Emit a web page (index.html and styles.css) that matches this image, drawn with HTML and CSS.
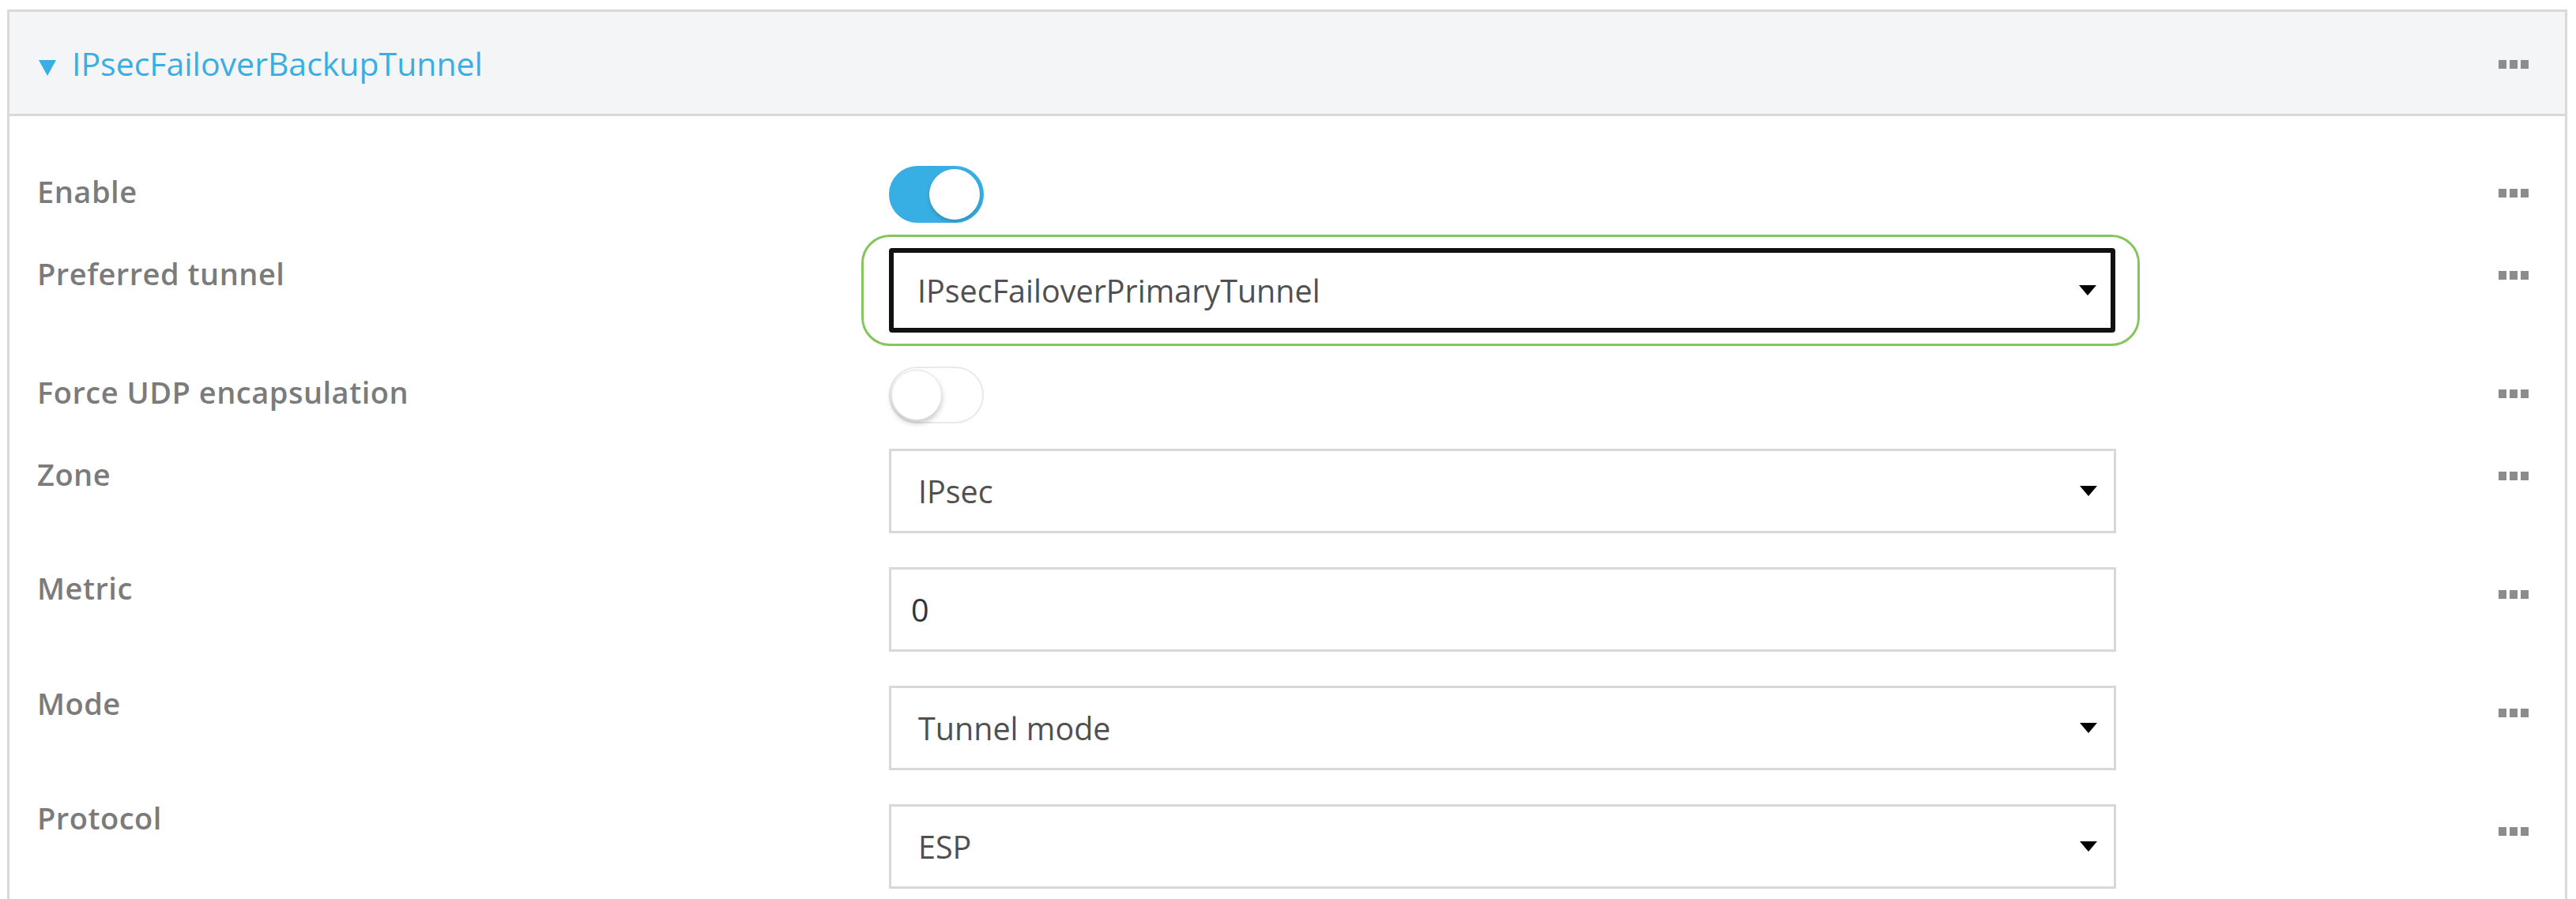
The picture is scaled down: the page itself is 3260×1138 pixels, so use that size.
FILE: index.html
```html
<!DOCTYPE html>
<html lang="en">
<head>
<meta charset="utf-8">
<title>IPsecFailoverBackupTunnel</title>
<link rel="stylesheet" href="styles.css">
</head>
<body>
<div class="panel">
  <div class="panel-header">
    <div class="title"><svg class="title-caret" viewBox="0 0 22 20" width="22" height="20"><path d="M0 0H22L11 20Z"/></svg><span class="title-text">IPsecFailoverBackupTunnel</span></div>
    <svg class="more" viewBox="0 0 38 11" width="38" height="11"><rect x="0" y="0" width="10" height="11"/><rect x="14" y="0" width="10" height="11"/><rect x="28" y="0" width="10" height="11"/></svg>
  </div>

  <div class="panel-body">
    <div class="row row--toggle">
      <div class="label">Enable</div>
      <div class="control"><span class="switch is-on"><span class="knob"></span></span></div>
      <div class="actions"><svg class="more" viewBox="0 0 38 11" width="38" height="11"><rect x="0" y="0" width="10" height="11"/><rect x="14" y="0" width="10" height="11"/><rect x="28" y="0" width="10" height="11"/></svg></div>
    </div>

    <div class="row row--select">
      <div class="label">Preferred tunnel</div>
      <div class="control">
        <div class="highlight">
          <div class="select select--focus"><span class="select-value">IPsecFailoverPrimaryTunnel</span><svg class="caret" viewBox="0 0 22 13" width="22" height="13"><path d="M0 0H22L11 13Z"/></svg></div>
        </div>
      </div>
      <div class="actions"><svg class="more" viewBox="0 0 38 11" width="38" height="11"><rect x="0" y="0" width="10" height="11"/><rect x="14" y="0" width="10" height="11"/><rect x="28" y="0" width="10" height="11"/></svg></div>
    </div>

    <div class="row row--toggle">
      <div class="label">Force UDP encapsulation</div>
      <div class="control"><span class="switch"><span class="knob"></span></span></div>
      <div class="actions"><svg class="more" viewBox="0 0 38 11" width="38" height="11"><rect x="0" y="0" width="10" height="11"/><rect x="14" y="0" width="10" height="11"/><rect x="28" y="0" width="10" height="11"/></svg></div>
    </div>

    <div class="row row--select">
      <div class="label">Zone</div>
      <div class="control">
        <div class="select"><span class="select-value">IPsec</span><svg class="caret" viewBox="0 0 22 13" width="22" height="13"><path d="M0 0H22L11 13Z"/></svg></div>
      </div>
      <div class="actions"><svg class="more" viewBox="0 0 38 11" width="38" height="11"><rect x="0" y="0" width="10" height="11"/><rect x="14" y="0" width="10" height="11"/><rect x="28" y="0" width="10" height="11"/></svg></div>
    </div>

    <div class="row row--select">
      <div class="label label--lift-s">Metric</div>
      <div class="control">
        <div class="input"><span class="input-value">0</span></div>
      </div>
      <div class="actions"><svg class="more" viewBox="0 0 38 11" width="38" height="11"><rect x="0" y="0" width="10" height="11"/><rect x="14" y="0" width="10" height="11"/><rect x="28" y="0" width="10" height="11"/></svg></div>
    </div>

    <div class="row row--select">
      <div class="label label--lift-m">Mode</div>
      <div class="control">
        <div class="select"><span class="select-value">Tunnel mode</span><svg class="caret" viewBox="0 0 22 13" width="22" height="13"><path d="M0 0H22L11 13Z"/></svg></div>
      </div>
      <div class="actions"><svg class="more" viewBox="0 0 38 11" width="38" height="11"><rect x="0" y="0" width="10" height="11"/><rect x="14" y="0" width="10" height="11"/><rect x="28" y="0" width="10" height="11"/></svg></div>
    </div>

    <div class="row row--select">
      <div class="label label--lift-l">Protocol</div>
      <div class="control">
        <div class="select"><span class="select-value">ESP</span><svg class="caret" viewBox="0 0 22 13" width="22" height="13"><path d="M0 0H22L11 13Z"/></svg></div>
      </div>
      <div class="actions"><svg class="more" viewBox="0 0 38 11" width="38" height="11"><rect x="0" y="0" width="10" height="11"/><rect x="14" y="0" width="10" height="11"/><rect x="28" y="0" width="10" height="11"/></svg></div>
    </div>
  </div>
</div>
</body>
</html>
```
FILE: styles.css
```css
* {
  box-sizing: border-box;
}

html {
  overflow: hidden;
}

html,
body {
  margin: 0;
  padding: 0;
  background: #ffffff;
}

body {
  font-family: "Open Sans", Lato, "Liberation Sans", sans-serif;
}

.panel {
  margin: 12px 11px 0 9px;
  border: 3px solid #d9d9d9;
  border-bottom: none;
}

.panel-header {
  height: 132px;
  background: #f4f5f7;
  border-bottom: 3px solid #d9d9d9;
  display: flex;
  align-items: center;
  justify-content: space-between;
  padding: 0 46px 0 37px;
}

.title {
  font-size: 41px;
  line-height: 54px;
  color: #3aaee2;
  font-weight: 400;
}

.title-caret {
  fill: #3aaee2;
  vertical-align: baseline;
  margin-right: 20px;
}

.more {
  display: block;
  fill: #8c8c8c;
}

.panel-header .more {
  margin-top: 3px;
}

.panel-body {
  padding: 63px 46px 0 35px;
}

.row {
  display: grid;
  grid-template-columns: 1078px 1553px 1fr;
  align-items: start;
}

.row--toggle {
  height: 104px;
}

.row--select {
  height: 150px;
}

.label {
  font-size: 38px;
  line-height: 46px;
  letter-spacing: 0.5px;
  font-weight: 600;
  color: #7b7b7b;
  padding-top: 9px;
}

.label--lift-s {
  padding-top: 3px;
}

.label--lift-m {
  padding-top: 0;
  margin-top: -1px;
}

.label--lift-l {
  padding-top: 0;
  margin-top: -6px;
}

.actions {
  justify-self: end;
  padding-top: 29px;
}

/* switches */
.switch {
  display: flex;
  align-items: center;
  width: 120px;
  height: 72px;
  border-radius: 36px;
  padding: 0 5px;
  background: #ffffff;
  border: 2px solid #e9e9e9;
}

.switch.is-on {
  background: #38afe4;
  border-color: #38afe4;
  justify-content: flex-end;
  padding: 0 3px;
}

.knob {
  width: 64px;
  height: 64px;
  border-radius: 50%;
  background: #ffffff;
  border: 1px solid #e2e2e2;
  box-shadow: 0 4px 7px rgba(0, 0, 0, 0.22);
}

.switch:not(.is-on) .knob {
  margin-left: -4px;
}

.is-on .knob {
  border-color: #ffffff;
  box-shadow: 0 3px 5px rgba(0, 0, 0, 0.18);
}

/* selects and inputs */
.select,
.input {
  display: flex;
  align-items: center;
  justify-content: space-between;
  width: 1553px;
  height: 107px;
  border: 3px solid #d8d8d8;
  background: #ffffff;
  padding: 0 21px 0 34px;
}

.select--focus {
  border: 6px solid #111111;
  border-radius: 4px;
  padding: 0 18px 0 30px;
  width: 1552px;
}

.select-value {
  font-size: 39.5px;
  color: #505050;
}

.input {
  padding-left: 25px;
}

.input-value {
  font-size: 39.5px;
  color: #333333;
}

.caret {
  display: block;
  fill: #000000;
}

.highlight {
  margin: -17px -30px -17px -35px;
  padding: 14px 27px 14px 32px;
  border: 3px solid #84c55c;
  border-radius: 36px;
}
```
